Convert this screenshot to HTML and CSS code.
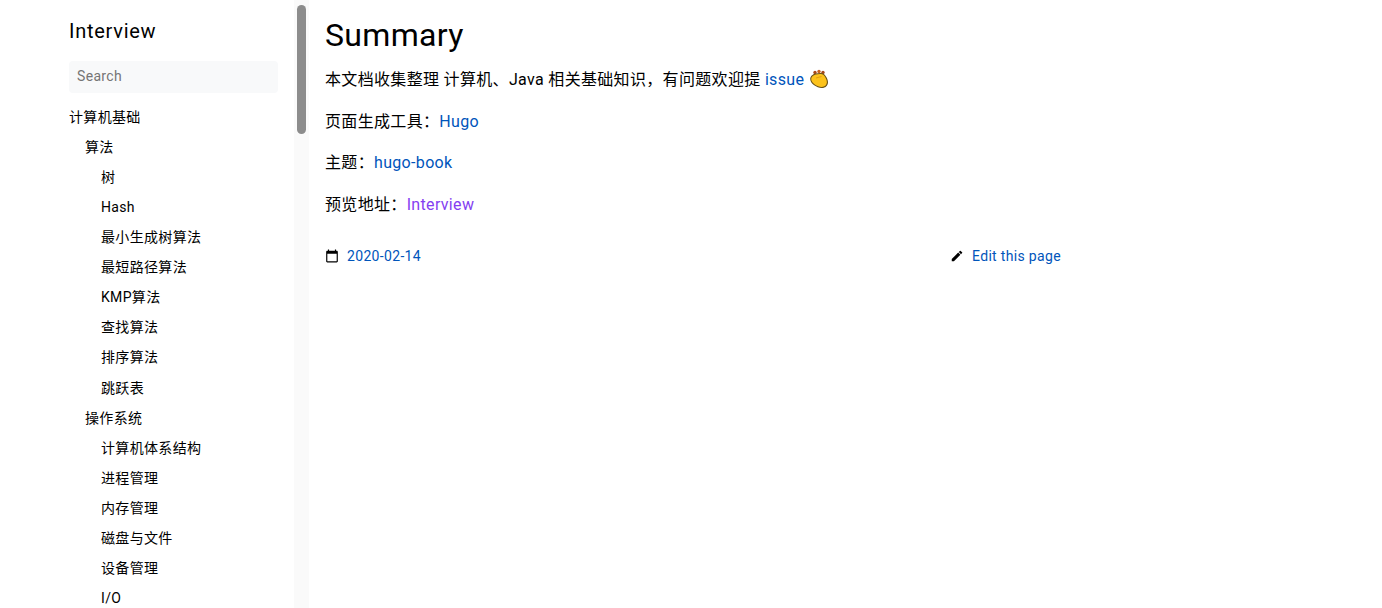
FILE: index.html
```html
<!DOCTYPE html>
<html lang="zh">

<head>
    <meta charset="utf-8">
    <meta name="viewport" content="width=device-width, initial-scale=1.0">
    <title>Summary | Interview</title>
    <link rel="stylesheet" href="styles.css">
</head>

<body>
    <main class="layout">
        <aside class="menu">
            <nav class="menu-inner">
                <h2 class="brand">Interview</h2>
                <input class="search" type="text" placeholder="Search">
                <ul class="tree">
                    <li><a href="#">计算机基础</a>
                        <ul>
                            <li><a href="#">算法</a>
                                <ul>
                                    <li><a href="#">树</a></li>
                                    <li><a href="#">Hash</a></li>
                                    <li><a href="#">最小生成树算法</a></li>
                                    <li><a href="#">最短路径算法</a></li>
                                    <li><a href="#">KMP算法</a></li>
                                    <li><a href="#">查找算法</a></li>
                                    <li><a href="#">排序算法</a></li>
                                    <li><a href="#">跳跃表</a></li>
                                </ul>
                            </li>
                            <li><a href="#">操作系统</a>
                                <ul>
                                    <li><a href="#">计算机体系结构</a></li>
                                    <li><a href="#">进程管理</a></li>
                                    <li><a href="#">内存管理</a></li>
                                    <li><a href="#">磁盘与文件</a></li>
                                    <li><a href="#">设备管理</a></li>
                                    <li><a href="#">I/O</a></li>
                                </ul>
                            </li>
                        </ul>
                    </li>
                </ul>
            </nav>
            <div class="scrollbar">
                <div class="thumb"></div>
            </div>
        </aside>

        <section class="page">
            <article class="markdown">
                <h1>Summary</h1>
                <p>本文档收集整理 计算机、Java 相关基础知识，有问题欢迎提 <a href="#">issue</a> <svg class="emoji" viewBox="0 0 20 20" role="img" aria-label="clap"><circle cx="6" cy="3.500" r="1.700" fill="#a8481a"/><circle cx="10" cy="2.500" r="1.700" fill="#c8601c"/><circle cx="14" cy="3.500" r="1.700" fill="#a8481a"/><path d="M1.200 10C1.200 7.500 3.500 5.200 6.500 4.500C9.500 3.800 13.500 3.500 15 5C16.500 6.500 19.200 10 19 13.500C18.800 17 15.800 19.300 12.500 19C8 18.600 1.200 15 1.200 10Z" fill="#6b5316"/><path d="M2.200 10C2.200 8 4.200 6 6.800 5.500C9.500 4.900 13 4.500 14.300 5.800C15.700 7.200 18 10.300 17.900 13.300C17.700 16.300 15.300 18.100 12.500 17.900C8.500 17.600 2.200 14.300 2.200 10Z" fill="#fcc21b"/><path d="M7 9 12.500 7.500" fill="none" stroke="#e0a010" stroke-width="1"/></svg></p>
                <p>页面生成工具：<a href="#">Hugo</a></p>
                <p>主题：<a href="#">hugo-book</a></p>
                <p>预览地址：<a class="visited" href="#">Interview</a></p>
            </article>

            <footer class="page-footer">
                <a class="meta" href="#">
                    <svg class="icon" viewBox="0 0 24 24"><path d="M20 3h-1V1h-2v2H7V1H5v2H4c-1.100 0-2 .9-2 2v16c0 1.100.9 2 2 2h16c1.100 0 2-.9 2-2V5c0-1.100-.9-2-2-2zm0 18H4V8h16v13z"/></svg>
                    <span>2020-02-14</span>
                </a>
                <a class="meta" href="#">
                    <svg class="icon" viewBox="0 0 24 24"><path d="M3 17.250V21h3.750L17.810 9.940l-3.750-3.750L3 17.250zM20.710 7.040a1 1 0 0 0 0-1.410l-2.340-2.340a1 1 0 0 0-1.410 0l-1.830 1.830 3.750 3.750 1.830-1.830z"/></svg>
                    <span>Edit this page</span>
                </a>
            </footer>
        </section>
    </main>
</body>

</html>
```

FILE: styles.css
```css
* {
    box-sizing: border-box;
    padding: 0;
    margin: 0;
}

html,
body {
    height: 100%;
    overflow: hidden;
}

body {
    background: white;
    color: black;
    font-family: Roboto, "Noto Sans CJK SC", sans-serif;
    font-size: 16px;
    letter-spacing: 0.33px;
}

a {
    color: #0055bb;
    text-decoration: none;
}

.layout {
    display: flex;
    height: 100%;
}

/* sidebar */
.menu {
    display: flex;
    flex: 0 0 256px;
    height: 100%;
    margin-left: 53px;
    overflow: hidden;
    font-size: 14px;
}

.menu-inner {
    flex: 0 0 241px;
    padding: 16px;
}

.scrollbar {
    flex: 0 0 15px;
    padding: 5px 3px 0;
    background: #fafafa;
}

.thumb {
    height: 129px;
    border-radius: 5px;
    background: #8c8c8c;
}

.brand {
    font-size: 20px;
    font-weight: 400;
    letter-spacing: 0.73px;
    line-height: 30px;
    margin-bottom: 15px;
}

.search {
    display: block;
    width: 100%;
    height: 32px;
    padding: 0 8px 2px;
    border: 0;
    border-radius: 4px;
    background: #f8f9fa;
    font: inherit;
    letter-spacing: inherit;
    margin-bottom: 8.950px;
}

.search::placeholder {
    color: #757575;
}

.tree,
.tree ul {
    list-style: none;
}

.tree ul {
    padding-left: 16px;
}

.tree a {
    display: block;
    color: black;
    line-height: 22.06px;
    padding: 4px 0;
}

/* content */
.page {
    flex: 1;
    min-width: 0;
    padding: 16px;
}

.markdown h1 {
    font-size: 32px;
    font-weight: 400;
    line-height: 38px;
    margin-bottom: 13px;
}

.markdown p {
    line-height: 25.6px;
    margin-bottom: 16px;
}

.visited {
    color: #8440f1;
}

.emoji {
    width: 20px;
    height: 20px;
    vertical-align: -4px;
}

.page-footer {
    display: grid;
    grid-template-columns: 625px 1fr;
    margin-top: 28px;
    font-size: 14px;
}

.meta {
    display: flex;
    align-items: center;
    gap: 8px;
    line-height: 22px;
}

.icon {
    width: 14px;
    height: 14px;
    fill: black;
}
```
